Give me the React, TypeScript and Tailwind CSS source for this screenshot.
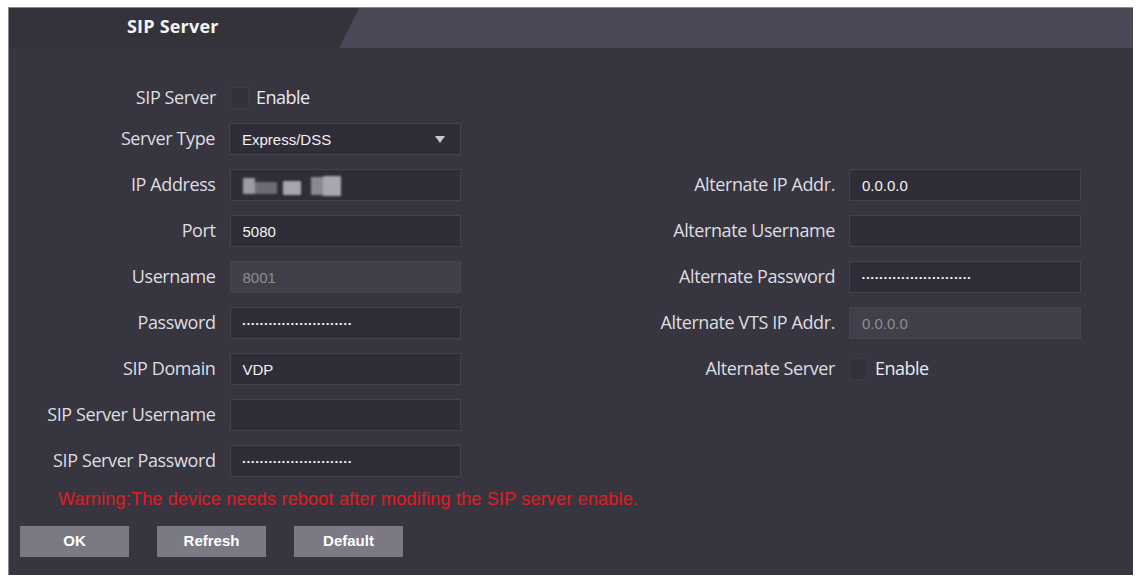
import React from "react";

const font = { fontFamily: '"Open Sans", "Liberation Sans", sans-serif' };

function Dots() {
  return (
    <span className="text-[8px] tracking-[1.6px] text-white leading-none" style={{ fontFamily: '"Liberation Sans", sans-serif' }}>
      •••••••••••••••••••••••••
    </span>
  );
}

function Field({ children, disabled }: { children?: React.ReactNode; disabled?: boolean }) {
  return (
    <div
      className={
        "w-[232px] h-[32px] flex items-center pl-[12px] pt-[2px] border border-[#44424e] text-[15px] " +
        (disabled ? "bg-[#413f4a] text-[#8e8c96]" : "bg-[#2f2d38] text-[#f2f2f2]")
      }
      style={{ fontFamily: '"Liberation Sans", Arial, sans-serif' }}
    >
      {children}
    </div>
  );
}

function Row({ label, labelW, children, h = 46 }: { label: string; labelW: string; children: React.ReactNode; h?: number }) {
  return (
    <div className={"flex items-center gap-[14px] " + (h === 36 ? "h-[36px]" : "h-[46px]")}>
      <div className={labelW + " text-right text-[18px] text-[#dedde2] tracking-[-0.4px] mb-[2px]"}>{label}</div>
      {children}
    </div>
  );
}

function Check() {
  return (
    <div className="flex items-center gap-[7px]">
      <div className="w-[19px] h-[22px] bg-[#33313b] border border-[#3d3b46]" />
      <span className="text-[18px] text-[#ecebef] tracking-[-0.5px] mb-[2px]">Enable</span>
    </div>
  );
}

function Btn({ label }: { label: string }) {
  return (
    <button
      className="w-[109px] h-[31px] bg-[#7b7a84] text-white text-[15px] font-bold"
      style={{ fontFamily: '"Liberation Sans", Arial, sans-serif' }}
    >
      {label}
    </button>
  );
}

export default function App() {
  const L = "w-[207px]";
  const R = "w-[374px]";
  return (
    <div className="w-[1137px] h-[581px] bg-white pt-[7px] pl-[8px] pr-[4px] pb-[6px]" style={font}>
      <div className="h-full bg-[#37353f] flex flex-col border-l border-t border-[#8a8990]">
        {/* header */}
        <div className="h-[40px] flex bg-[#34333b]">
          <div className="w-[330px] pl-[118px] flex items-center pb-[4px]">
            <span className="text-[18px] font-bold text-[#f4f4f6] tracking-[0.2px]">SIP Server</span>
          </div>
          <div className="flex-1 bg-[#4b4957] [clip-path:polygon(20px_0,100%_0,100%_100%,0_100%)]" />
        </div>

        {/* body */}
        <div className="flex pt-[32px]">
          <div className="w-[452px] flex flex-col">
            <Row label="SIP Server" labelW={L} h={36}>
              <Check />
            </Row>
            <Row label="Server Type" labelW={L}>
              <div className="relative">
                <Field>Express/DSS</Field>
                <svg className="absolute right-[16px] top-[13px]" width="10" height="7" viewBox="0 0 10 7">
                  <path d="M0 0 H10 L5 7 Z" fill="#c9c8d0" />
                </svg>
              </div>
            </Row>
            <Row label="IP Address" labelW={L}>
              <Field>
                <div className="flex items-center blur-[1px] h-[20px]">
                  <div className="w-[12px] h-[16px] bg-[#9d9ca4]" />
                  <div className="w-[22px] h-[12px] bg-[#6d6c76] mt-[4px]" />
                  <div className="w-[6px]" />
                  <div className="w-[18px] h-[14px] bg-[#a7a6ae] mt-[4px]" />
                  <div className="w-[10px]" />
                  <div className="w-[12px] h-[18px] bg-[#8a8992]" />
                  <div className="w-[18px] h-[20px] bg-[#a8a7af]" />
                </div>
              </Field>
            </Row>
            <Row label="Port" labelW={L}>
              <Field>5080</Field>
            </Row>
            <Row label="Username" labelW={L}>
              <Field disabled>8001</Field>
            </Row>
            <Row label="Password" labelW={L}>
              <Field>
                <Dots />
              </Field>
            </Row>
            <Row label="SIP Domain" labelW={L}>
              <Field>VDP</Field>
            </Row>
            <Row label="SIP Server Username" labelW={L}>
              <Field />
            </Row>
            <Row label="SIP Server Password" labelW={L}>
              <Field>
                <Dots />
              </Field>
            </Row>
          </div>

          <div className="flex flex-col mt-[82px]">
            <Row label="Alternate IP Addr." labelW={R}>
              <Field>0.0.0.0</Field>
            </Row>
            <Row label="Alternate Username" labelW={R}>
              <Field />
            </Row>
            <Row label="Alternate Password" labelW={R}>
              <Field>
                <Dots />
              </Field>
            </Row>
            <Row label="Alternate VTS IP Addr." labelW={R}>
              <Field disabled>0.0.0.0</Field>
            </Row>
            <Row label="Alternate Server" labelW={R}>
              <Check />
            </Row>
          </div>
        </div>

        {/* warning */}
        <div
          className="pl-[49px] mt-[4px] text-[18px] text-[#e01b24] leading-[22px] tracking-[0.2px]"
          style={{ fontFamily: '"Liberation Sans", Arial, sans-serif' }}
        >
          Warning:The device needs reboot after modifing the SIP server enable.
        </div>

        {/* buttons */}
        <div className="flex gap-[28px] pl-[11px] mt-[16px]">
          <Btn label="OK" />
          <Btn label="Refresh" />
          <Btn label="Default" />
        </div>
      </div>
    </div>
  );
}
